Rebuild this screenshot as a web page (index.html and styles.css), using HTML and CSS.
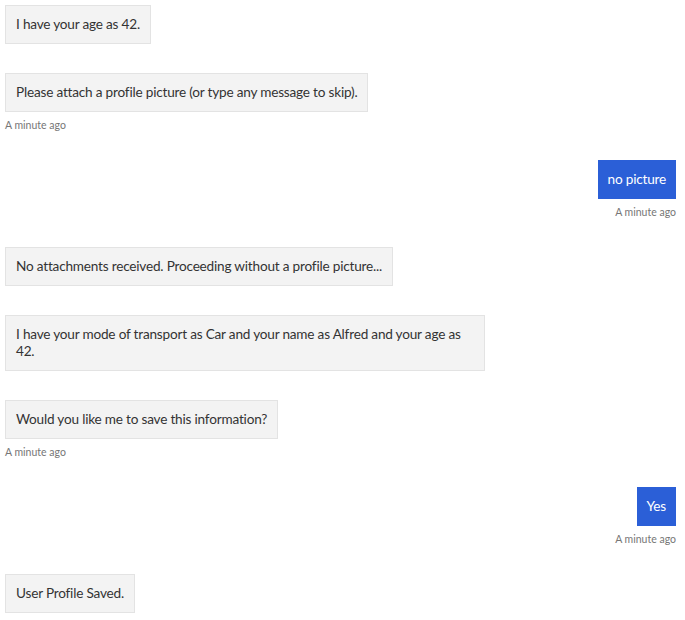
FILE: index.html
```html
<!DOCTYPE html>
<html>
<head>
<meta charset="utf-8">
<link rel="stylesheet" href="styles.css">
</head>
<body>
<ul class="chat">
  <li class="msg bot"><div class="bubble">I have your age as 42.</div></li>
  <li class="msg bot"><div class="bubble">Please attach a profile picture (or type any message to skip).</div><div class="time">A minute ago</div></li>
  <li class="msg user"><div class="bubble">no picture</div><div class="time">A minute ago</div></li>
  <li class="msg bot"><div class="bubble">No attachments received. Proceeding without a profile picture...</div></li>
  <li class="msg bot"><div class="bubble">I have your mode of transport as Car and your name as Alfred and your age as 42.</div></li>
  <li class="msg bot"><div class="bubble">Would you like me to save this information?</div><div class="time">A minute ago</div></li>
  <li class="msg user"><div class="bubble">Yes</div><div class="time">A minute ago</div></li>
  <li class="msg bot"><div class="bubble">User Profile Saved.</div></li>
</ul>
</body>
</html>
```
FILE: styles.css
```css
html, body {
  margin: 0;
  padding: 0;
  background: #ffffff;
}
.chat {
  list-style: none;
  margin: 0;
  padding: 5px 9px 0 5px;
  display: flex;
  flex-direction: column;
  gap: 29px;
  font-family: Lato, "Open Sans", sans-serif;
}
.msg {
  display: flex;
  flex-direction: column;
  align-items: flex-start;
}
.msg.user {
  align-items: flex-end;
}
.bubble {
  box-sizing: border-box;
  max-width: 480px;
  padding: 10px 10px;
  font-size: 13.6px;
  letter-spacing: -0.2px;
  line-height: 17px;
  color: #333333;
  background: #f3f3f3;
  border: 1px solid #e3e3e3;
}
.user .bubble {
  background: #2b5fd7;
  border-color: #2b5fd7;
  color: #ffffff;
  padding: 10px 9px;
}
.time {
  font-size: 10.5px;
  line-height: 12px;
  color: #767676;
  margin-top: 7px;
  height: 12px;
}
```
